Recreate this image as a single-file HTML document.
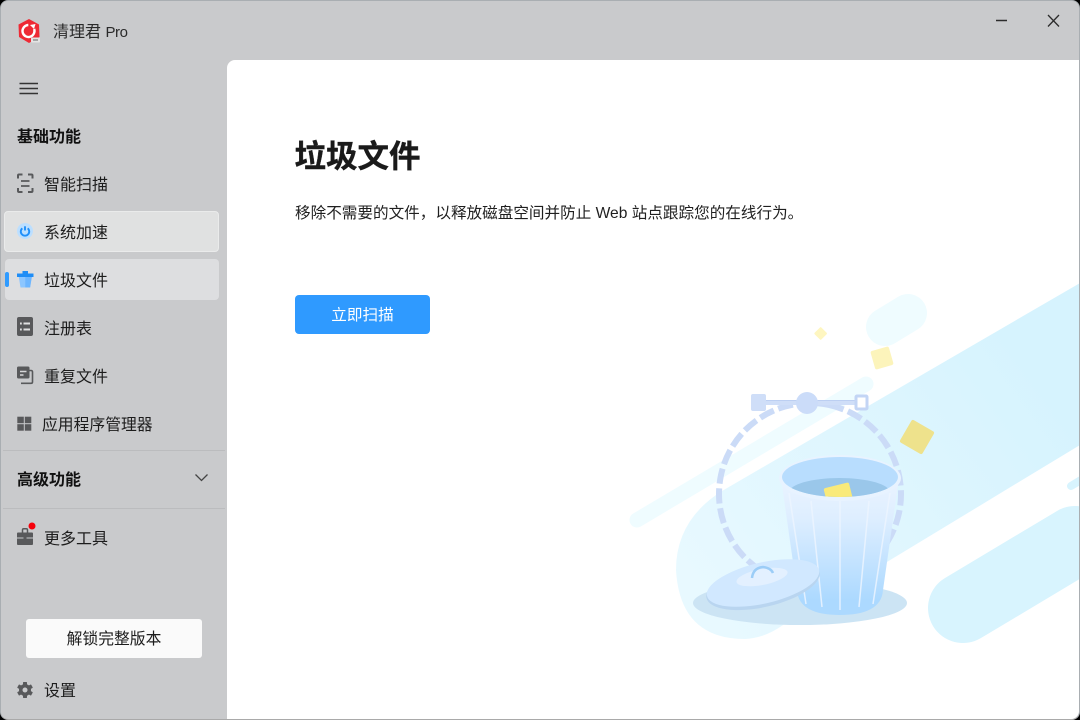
<!DOCTYPE html>
<html lang="zh-CN"><head><meta charset="utf-8"><title>清理君 Pro</title>
<style>
html,body{margin:0;padding:0;width:1080px;height:720px;overflow:hidden;background:#000}
*{box-sizing:border-box}
body{font-family:"Liberation Sans","Noto Sans CJK SC",sans-serif;color:#1c1c1c}
#win{position:absolute;left:0;top:0;width:1080px;height:720px;background:#c9cacc;border-radius:8px;overflow:hidden;border:1px solid #a9aeb2;border-bottom-color:#a9a9a9}
.t{position:absolute;white-space:nowrap;font-size:16px;line-height:24px}
.b{font-weight:700}
#main{position:absolute;left:227px;top:60px;width:852px;height:659px;background:#fff;border-radius:8px 0 8px 0}
.abs{position:absolute}
svg{position:absolute;overflow:visible}
</style></head><body>
<div id="win"></div>
<div id="main"></div>

<!-- illustration + all icons use page coordinates -->
<svg style="left:0;top:0" width="1080" height="720" viewBox="0 0 1080 720">
<defs>
<linearGradient id="band" x1="700" y1="600" x2="1030" y2="360" gradientUnits="userSpaceOnUse"><stop offset="0" stop-color="#e8f9ff"/><stop offset="1" stop-color="#d6f3fe"/></linearGradient>
<linearGradient id="bin" x1="0" y1="483" x2="0" y2="600" gradientUnits="userSpaceOnUse"><stop offset="0" stop-color="#e9f3ff"/><stop offset="0.3" stop-color="#deeeff"/><stop offset="1" stop-color="#acd9ff"/></linearGradient>
<clipPath id="clipmain"><rect x="227" y="60" width="852" height="659"/></clipPath>
<clipPath id="rim"><ellipse cx="840" cy="477" rx="58" ry="20"/></clipPath>
</defs>
<g clip-path="url(#clipmain)">
<path d="M1080 283L722 491Q676 520 676 570Q680 639 745 639Q765 638 783 625L1080 445Z" fill="url(#band)"/>
<path d="M637 520L866 384" stroke="#effcff" stroke-width="15" stroke-linecap="round" fill="none"/>
<path d="M885 327L908 313" stroke="#effcff" stroke-width="38" stroke-linecap="round" fill="none"/>
<path d="M963 608L1075 541" stroke="#d8f4fe" stroke-width="70" stroke-linecap="round" fill="none"/>
<path d="M1071 486L1086 477" stroke="#d8f4fe" stroke-width="8" stroke-linecap="round" fill="none"/>
<rect x="904" y="424" width="26" height="26" rx="2" transform="rotate(30 917 437)" fill="#eee28c"/>
<rect x="872.500" y="348.500" width="19" height="19" rx="2" transform="rotate(-16 882 358)" fill="#fcf4bb"/>
<rect x="816" y="329" width="9.500" height="9.500" rx="1" transform="rotate(45 821 333.500)" fill="#fef6c0"/>
<!-- shadow -->
<ellipse cx="800" cy="603" rx="107" ry="22" fill="#cce4f4"/>
<!-- dashed ring -->
<circle cx="810" cy="494" r="91" fill="none" stroke="#cbdbf7" stroke-width="6" stroke-dasharray="15.300 4.700" transform="rotate(-78 810 494)"/>
<!-- handle -->
<path d="M760 402.500H862" stroke="#cfdef8" stroke-width="5"/>
<path d="M760 400.500H862" stroke="#bccff2" stroke-width="1"/>
<rect x="751" y="394" width="15" height="17" rx="2" fill="#cfdef8"/>
<circle cx="807" cy="403" r="11" fill="#cbdcf9"/>
<rect x="856" y="396" width="11" height="13" fill="#fff" stroke="#c3d5f5" stroke-width="3" rx="1"/>
<!-- bin body -->
<path d="M782 485L797 590C798 608 815 615 840 615C865 615 882 608 883 590L898 485Z" fill="url(#bin)"/>
<g stroke="#edf5ff" stroke-width="1.500" fill="none" opacity=".85">
<path d="M789 493L806 604"/><path d="M811 501L822 607"/><path d="M840 501V610"/><path d="M869 501L859 607"/><path d="M890 493L873 604"/>
</g>
<!-- rim -->
<ellipse cx="840" cy="478" rx="61" ry="23" fill="#e8f3ff"/>
<ellipse cx="840" cy="477" rx="58" ry="20" fill="#b8ddfe"/>
<g clip-path="url(#rim)">
<ellipse cx="839.500" cy="492" rx="50" ry="14" fill="#9ac7ea"/>
<rect x="826" y="485" width="26" height="24" rx="2" transform="rotate(-14 839 497)" fill="#f9ea7a"/>
</g>
<!-- lid -->
<ellipse cx="763" cy="585" rx="58" ry="22" transform="rotate(-13 763 585)" fill="#b9d5f0"/>
<ellipse cx="763" cy="583" rx="57.500" ry="20.500" transform="rotate(-13 763 583)" fill="#d1e8ff"/>
<ellipse cx="762" cy="577" rx="26" ry="8" transform="rotate(-11 762 577)" fill="#e3f0ff"/>
<path d="M752 578Q753 568 763 567Q771 568 773 573" fill="none" stroke="#9ccdf7" stroke-width="2.500"/>
</g>

<!-- logo -->
<path d="M29 19L39 24.500L39.500 37L29 43L19 37L18.500 24.500Z" fill="#ee2a35"/>
<circle cx="28.500" cy="31" r="6" fill="none" stroke="#fff" stroke-width="2.400" stroke-dasharray="30 8" transform="rotate(-20 28.500 31)"/>
<path d="M30 25L35.500 24L34 29Z" fill="#fff"/>
<rect x="31" y="37.500" width="9" height="5" rx="1" fill="#e4e4e4"/>
<path d="M33 40H38" stroke="#666" stroke-width="1"/>
<!-- hamburger -->
<path d="M19.500 83.500H38M19.500 88.500H38M19.500 93.500H38" stroke="#333" stroke-width="1.500"/>
<!-- scan -->
<path d="M18 178.500v-3q0-1 1-1h3.500M28 174.500h3.500q1 0 1 1v3M18 188v3q0 1 1 1h3.500M28 192h3.500q1 0 1-1v-3" fill="none" stroke="#58595b" stroke-width="2"/>
<path d="M21 181h8.500M21 186h8.500" stroke="#58595b" stroke-width="1.800"/>
<!-- register -->
<rect x="17" y="317" width="16" height="19" rx="2" fill="#58595b"/>
<path d="M20 323.500h1.800M23.500 323.500h6.500M20 329.500h1.800M23.500 329.500h6.500" stroke="#dfe0e1" stroke-width="2"/>
<!-- duplicate -->
<path d="M20 370.500h11q1.500 0 1.500 1.500v10q0 1.300-1.500 1.300H21" fill="none" stroke="#58595b" stroke-width="1.600"/>
<rect x="17" y="366.500" width="12.500" height="12" rx="1.500" fill="#58595b"/>
<path d="M20 371.500h6.500M20 375h3.500" stroke="#d5d6d7" stroke-width="1.400"/>
<!-- apps -->
<rect x="17.300" y="416.700" width="6.500" height="6.500" fill="#58595b"/><rect x="24.800" y="416.700" width="6.500" height="6.500" fill="#58595b"/>
<rect x="17.300" y="424.200" width="6.500" height="6.500" fill="#58595b"/><rect x="24.800" y="424.200" width="6.500" height="6.500" fill="#58595b"/>
<!-- dividers -->
<path d="M3 450.500H225M3 508.500H225" stroke="#bbbcbe" stroke-width="1"/>
<!-- chevron -->
<path d="M195.500 474.500L201.500 480.500L207.500 474.500" fill="none" stroke="#444" stroke-width="1.300"/>
<!-- toolbox -->
<path d="M22.500 533v-3q0-1.200 1.200-1.200h2.600q1.200 0 1.200 1.200v3" fill="none" stroke="#58595b" stroke-width="1.500"/>
<path d="M17 533.500q0-1 1-1h14q1 0 1 1v4H17Z" fill="#58595b"/>
<path d="M17 538.500h16v5.500q0 1-1 1H18q-1 0-1-1Z" fill="#58595b"/>
<path d="M23.500 537h3v2.500h-3Z" fill="#58595b"/>
<circle cx="32" cy="526" r="3.500" fill="#f6000a"/>
<!-- gear -->
<g transform="translate(25 690)" fill="#58595b">
<circle r="6"/>
<rect x="-2" y="-8" width="4" height="4" rx=".6"/>
<rect x="-2" y="-8" width="4" height="4" rx=".6" transform="rotate(60)"/>
<rect x="-2" y="-8" width="4" height="4" rx=".6" transform="rotate(120)"/>
<rect x="-2" y="-8" width="4" height="4" rx=".6" transform="rotate(180)"/>
<rect x="-2" y="-8" width="4" height="4" rx=".6" transform="rotate(240)"/>
<rect x="-2" y="-8" width="4" height="4" rx=".6" transform="rotate(300)"/>
<circle r="2.500" fill="#c9cacc"/>
</g>
<!-- window buttons -->
<path d="M996 20.500H1007" stroke="#2c2c2c" stroke-width="1.500"/>
<path d="M1048 15L1059 26.500M1059 15L1048 26.500" stroke="#2c2c2c" stroke-width="1.300"/>
</svg>

<div class="t" style="left:53px;top:21px;color:#2a2a2a">清理君 <span style="font-size:15px;letter-spacing:-.4px">Pro</span></div>
<div class="t b" style="left:17px;top:126px;color:#111">基础功能</div>
<div class="t" style="left:44px;top:174px">智能扫描</div>
<div class="abs" style="left:4px;top:211px;width:215px;height:41px;background:#e0e1e1;border:1px solid #eaebeb;border-radius:4px"></div>
<div class="abs" style="left:5px;top:259px;width:214px;height:41px;background:#dddee0;border-radius:4px"></div>
<div class="abs" style="left:5px;top:272px;width:4px;height:15px;background:#2f9bff;border-radius:2px"></div>
<svg style="left:0;top:0" width="60" height="300" viewBox="0 0 60 300">
<circle cx="25" cy="231" r="8" fill="#bcdfff"/>
<path d="M22.300 228.300a4.200 4.200 0 1 0 5.400 0" fill="none" stroke="#2090fa" stroke-width="1.900"/>
<path d="M25 226.300v4.200" stroke="#2090fa" stroke-width="1.900"/>
<path d="M18.800 277h13l-1.700 10.500h-9.600Z" fill="#8cc6ff"/>
<path d="M25.300 277h6.500l-1.700 10.500h-4.800Z" fill="#6db6ff"/>
<path d="M17 273.500h16.500v3.500H17Z" fill="#1f8df6"/>
<path d="M22.500 273.500v-2.500h5.500v2.500" fill="#1f8df6"/>
</svg>
<div class="t" style="left:44px;top:222px">系统加速</div>
<div class="t" style="left:44px;top:270px">垃圾文件</div>
<div class="t" style="left:44px;top:318px">注册表</div>
<div class="t" style="left:44px;top:366px">重复文件</div>
<div class="t" style="left:42px;top:414px;font-size:15.800px">应用程序管理器</div>
<div class="t b" style="left:17px;top:469px;color:#111">高级功能</div>
<div class="t" style="left:44px;top:528px">更多工具</div>
<div class="abs" style="left:26px;top:619px;width:176px;height:39px;background:#fafafa;border-radius:3px"></div>
<div class="t" style="left:26px;top:628px;width:176px;text-align:center;font-size:15.800px">解锁完整版本</div>
<div class="t" style="left:44px;top:680px">设置</div>

<div class="t b" style="left:294.500px;top:133px;font-size:31.500px;line-height:46px;color:#1a1a1a;-webkit-text-stroke:.4px #1a1a1a">垃圾文件</div>
<div class="t" style="left:295px;top:202px;font-size:15.600px;color:#1f1f1f">移除不需要的文件，以释放磁盘空间并防止 Web 站点跟踪您的在线行为。</div>
<div class="abs" style="left:295px;top:295px;width:135px;height:39px;background:#2f9aff;border-radius:4px"></div>
<div class="t" style="left:295px;top:304px;width:135px;text-align:center;font-size:15.600px;color:#fff">立即扫描</div>
</body></html>
